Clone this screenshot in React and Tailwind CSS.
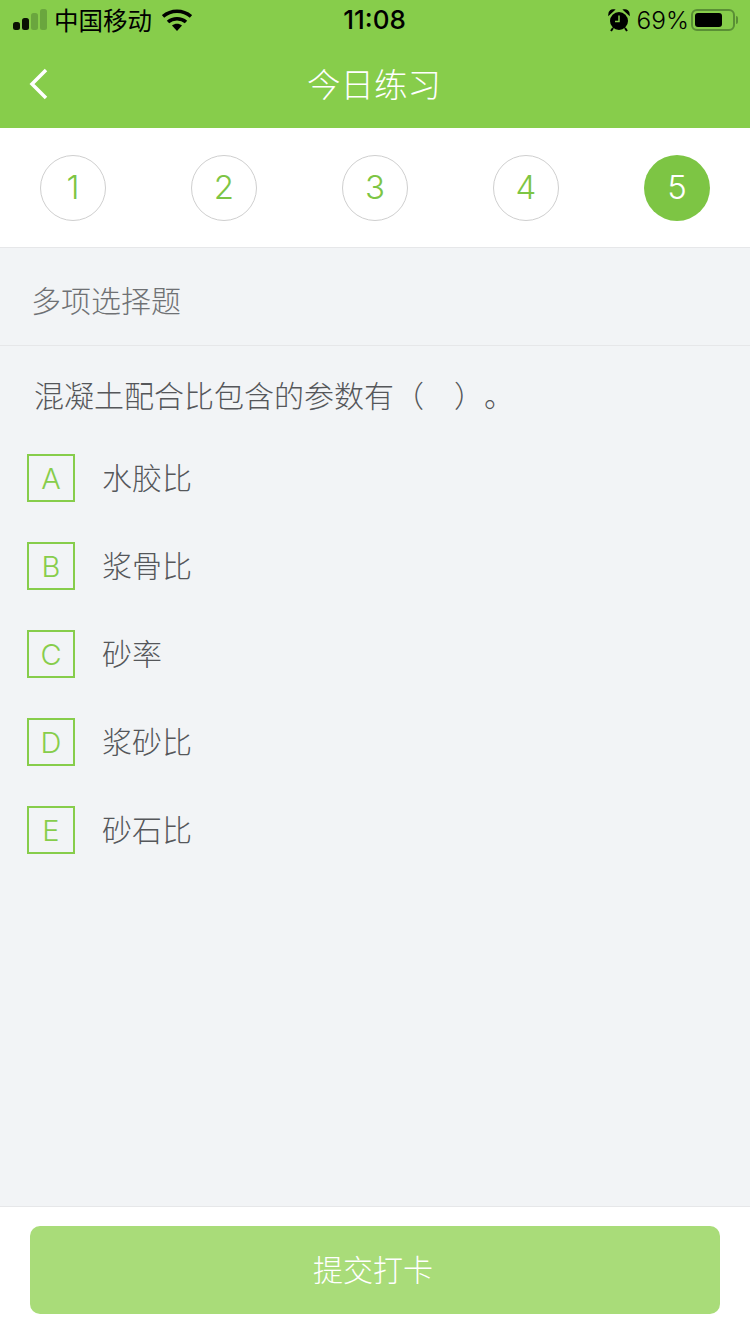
const steps = [1, 2, 3, 4, 5];

const options = [
  { key: 'A', text: '水胶比' },
  { key: 'B', text: '浆骨比' },
  { key: 'C', text: '砂率' },
  { key: 'D', text: '浆砂比' },
  { key: 'E', text: '砂石比' },
];

function SignalBars() {
  return (
    <svg width="34" height="22" viewBox="0 0 34 22" className="block">
      <rect x="0" y="13" width="7" height="8" rx="2.5" fill="#0b1203" />
      <rect x="9" y="9" width="7" height="12" rx="2.5" fill="#0b1203" />
      <rect x="18" y="4" width="7" height="17" rx="2.5" fill="#6aa63e" />
      <rect x="27" y="0" width="7" height="21" rx="2.5" fill="#6aa63e" />
    </svg>
  );
}

function Wifi() {
  return (
    <svg width="30" height="22" viewBox="0 0 30 22" className="block">
      <path d="M1 7.5C9 0.5 21 0.5 29 7.5" fill="none" stroke="#000" strokeWidth="3.6" />
      <path d="M6 13C11 8.6 19 8.6 24 13" fill="none" stroke="#000" strokeWidth="3.6" />
      <path d="M10 16.6C13 14 17 14 20 16.6L15 22Z" fill="#000" />
    </svg>
  );
}

function Alarm() {
  return (
    <svg width="22" height="24" viewBox="0 0 22 24" className="block">
      <circle cx="11" cy="13" r="9" fill="#000" />
      <path d="M1 6.5C1 3 3.5 1.5 6 2ZM21 6.5C21 3 18.500 1.500 16 2Z" fill="#000" stroke="#000" strokeWidth="1.5" />
      <path d="M11 7.500V13.500H7" fill="none" stroke="#87cd4b" strokeWidth="1.5" />
      <path d="M5 20L3 23M17 20L19 23" stroke="#000" strokeWidth="2" />
    </svg>
  );
}

function Battery() {
  return (
    <div className="flex items-center">
      <div className="flex items-center w-[44px] h-[22px] rounded-[6px] border-2 border-[#5a8f35] p-[2px]">
        <div className="w-[27px] h-[14px] rounded-[3px] bg-black" />
      </div>
      <div className="w-[2px] h-[8px] ml-[1px] rounded-r-sm bg-[#5a8f35]" />
    </div>
  );
}

export default function App() {
  return (
    <div className="flex flex-col w-[750px] h-[1334px] overflow-hidden bg-[#f2f4f6] font-['Noto_Sans_CJK_SC',sans-serif]">
      <header className="h-[128px] shrink-0 bg-[#87cd4b]">
        {/* status bar */}
        <div className="relative flex items-center justify-between h-[40px] pl-[13px] pr-[12px] text-black">
          <div className="flex items-center">
            <SignalBars />
            <span className="ml-[7px] text-[24.500px] leading-[40px] font-normal">中国移动</span>
            <span className="ml-[10px]"><Wifi /></span>
          </div>
          <span className="absolute left-0 right-[1px] text-center text-[26px] leading-[40px] font-medium font-['Inter',sans-serif]">11:08</span>
          <div className="flex items-center">
            <Alarm />
            <span className="ml-[7px] mr-[2px] text-[24.500px] leading-[40px] font-['Inter',sans-serif] font-light">69%</span>
            <Battery />
          </div>
        </div>
        {/* nav */}
        <div className="relative flex items-center justify-center h-[88px]">
          <svg width="20" height="32" viewBox="0 0 20 32" className="absolute left-[29px] top-[28px]">
            <path d="M17 2L3 16L17 30" fill="none" stroke="#fff" strokeWidth="3.500" />
          </svg>
          <h1 className="pr-[2px] -mt-[2px] text-[33.500px] leading-[88px] font-light text-white">今日练习</h1>
        </div>
      </header>

      <div className="flex items-center justify-between h-[120px] shrink-0 px-[40px] bg-white border-b border-[#e6e7e9]">
        {steps.map(n => (
          n === 5 ? (
            <div key={n} className="flex items-center justify-center w-[66px] h-[66px] pt-[1px] rounded-full bg-[#7dc544] text-white text-[33px] font-[350] font-['Inter',sans-serif]">{n}</div>
          ) : (
            <div key={n} className="flex items-center justify-center w-[66px] h-[66px] pt-[1px] rounded-full border border-[#cfcfcf] text-[#7dc544] text-[33px] font-[350] font-['Inter',sans-serif]">{n}</div>
          )
        ))}
      </div>

      <div className="flex items-center h-[98px] shrink-0 pl-[31px] pt-[6px] border-b border-[#e6e7e9] text-[30px] font-light text-[#6f7174]">
        多项选择题
      </div>

      <main className="flex-1 flex flex-col">
        <p className="pt-[26px] pl-[34px] text-[30px] leading-[44px] font-light text-[#55575a] whitespace-pre [text-spacing-trim:space-all]">混凝土配合比包含的参数有（　）。</p>
        <ul className="flex flex-col gap-[40px] pt-[38px] pl-[27px]">
          {options.map(o => (
            <li key={o.key} className="flex items-center h-[48px]">
              <span className="flex items-center justify-center w-[48px] h-[48px] pt-[1px] border-2 border-[#87cd4b] text-[#87cd4b] text-[29px] font-[350] font-['Inter',sans-serif]">{o.key}</span>
              <span className="ml-[27px] -mt-[4px] text-[30px] font-light text-[#55575a]">{o.text}</span>
            </li>
          ))}
        </ul>
      </main>

      <footer className="h-[128px] shrink-0 pt-[19px] px-[30px] bg-white border-t border-[#e6e7e9]">
        <button className="flex items-center justify-center w-full h-[88px] pr-[4px] pb-[4px] rounded-[10px] bg-[#a9dc79] text-[30px] font-light text-white">提交打卡</button>
      </footer>
    </div>
  );
}
